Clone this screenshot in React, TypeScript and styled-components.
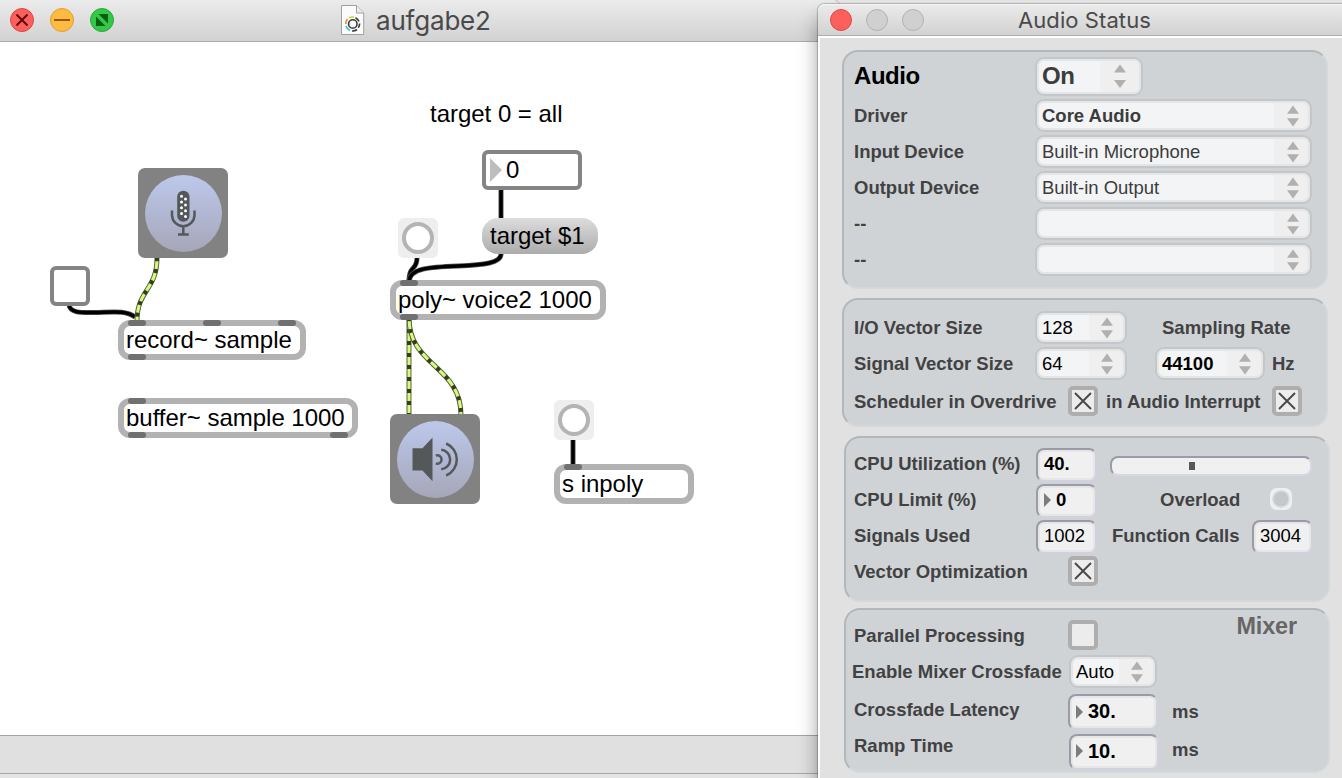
import React from "react";
import styled, { createGlobalStyle } from "styled-components";

const Global = createGlobalStyle`
  * { box-sizing: border-box; }
  body { margin: 0; background: #fff; font-family: "Liberation Sans", Arial, sans-serif; overflow: hidden; }
  svg { display: block; }
`;

const Desktop = styled.main`
  position: relative;
  width: 1342px;
  height: 778px;
  overflow: hidden;
  background: #e6e6e6;
`;

const PatcherWindow = styled.section`
  display: flex;
  flex-direction: column;
  width: 840px;
  height: 778px;
  background: #fff;
  border-top-right-radius: 8px;
  box-shadow: 0 0 1px 1px rgba(0, 0, 0, 0.2);
  overflow: hidden;
`;

const TitleBar = styled.header<{ $height: number; $size: number; $indent: number }>`
  display: flex;
  flex: none;
  align-items: center;
  height: ${(p) => p.$height}px;
  padding-left: ${(p) => p.$indent}px;
  background: linear-gradient(#ebebeb, #d2d2d2);
  border-bottom: 1px solid #adadad;
  color: #4a4a4a;
  font-family: Inter, Roboto, sans-serif;
  font-size: ${(p) => p.$size}px;
  white-space: nowrap;
`;

const Lights = styled.div<{ $gap: number }>`
  display: flex;
  gap: ${(p) => p.$gap}px;
`;

const Light = styled.span<{ $fill: string; $edge: string; $size?: number }>`
  display: grid;
  place-items: center;
  width: ${(p) => p.$size ?? 24}px;
  height: ${(p) => p.$size ?? 24}px;
  margin-top: ${(p) => (p.$size ? 0 : -1)}px;
  border-radius: 50%;
  background: ${(p) => p.$fill};
  border: 1px solid ${(p) => p.$edge};
`;

const DocIcon = styled.svg`
  margin-left: 227px;
`;

const Title = styled.h1<{ $left: number; $tracking: number }>`
  margin: 0 0 0 ${(p) => p.$left}px;
  font-size: inherit;
  font-weight: 400;
  letter-spacing: ${(p) => p.$tracking}px;
`;

const Canvas = styled.div`
  position: relative;
  flex: 1;
  background: #fff;
`;

const StatusBar = styled.footer`
  height: 43px;
  flex: none;
  background: #e0e0e0;
  border-top: 1px solid #a4a4a4;
`;

const StatusEdge = styled.div`
  height: 5px;
  margin-top: 37px;
  border-top: 1px solid #a8a8a8;
  background: #e4e4e4;
`;

const Node = styled.div<{ $x: number; $y: number; $w: number; $h: number }>`
  position: absolute;
  left: ${(p) => p.$x}px;
  top: ${(p) => p.$y - 42}px;
  width: ${(p) => p.$w}px;
  height: ${(p) => p.$h}px;
  display: flex;
  align-items: center;
  color: #000;
  font-size: 24px;
  letter-spacing: -0.02px;
  line-height: 28px;
  white-space: nowrap;
`;

const Comment = styled(Node)``;

const ObjectBox = styled(Node)`
  border: 6px solid #b2b2b2;
  border-radius: 12px;
  background: #fff;
  padding-left: 2px;
`;

const ToggleBox = styled(Node)`
  border: 4px solid #848484;
  border-radius: 6px;
  background: #fff;
`;

const NumberNode = styled(ToggleBox)`
  padding-left: 4px;
  gap: 4px;
`;

const MessageBox = styled(Node)`
  border-radius: 16px;
  background: linear-gradient(#dcdcdc, #acacac);
  padding-left: 8px;
`;

const BangBox = styled(Node)`
  justify-content: center;
  border-radius: 6px;
  background: #eeeeee;
`;

const BangRing = styled.span`
  width: 32px;
  height: 32px;
  border: 4px solid #b4b4b4;
  border-radius: 50%;
  background: #fff;
`;

const IoButton = styled(Node)`
  justify-content: center;
  border-radius: 7px;
  background: #828282;
`;

const IoDisc = styled.span`
  display: grid;
  place-items: center;
  width: 77px;
  height: 77px;
  border-radius: 50%;
  background: linear-gradient(#bcc8ec, #a6a6b8);
`;

const Port = styled.i<{ $x: number; $bottom?: boolean }>`
  position: absolute;
  left: ${(p) => p.$x}px;
  ${(p) => (p.$bottom ? "bottom: -6px;" : "top: -6px;")}
  width: 18px;
  height: 6px;
  border-radius: 3px;
  background: #707070;
`;

const Cords = styled.svg`
  position: absolute;
  left: 0;
  top: 0;
`;

const StatusWindow = styled.section`
  position: absolute;
  left: 818px;
  top: 4px;
  width: 540px;
  height: 790px;
  background: #e1e1e1;
  border-top-left-radius: 7px;
  box-shadow: 0 0 1px 1px rgba(0, 0, 0, 0.22), 0 14px 20px rgba(0, 0, 0, 0.38);
  display: flex;
  flex-direction: column;
`;

const StatusTitleBar = styled(TitleBar)`
  border-top-left-radius: 7px;
  box-shadow: inset 0 1px #f6f6f6;
`;

const StatusBody = styled.div`
  flex: 1;
  border-top: 2px solid #fff;
  border-left: 2px solid #fff;
  padding: 12px 0 0 22px;
`;

const Panel = styled.section<{ $height: number; $left?: number; $gap: number; $pad: number }>`
  display: flex;
  flex-direction: column;
  position: relative;
  width: 486px;
  height: ${(p) => p.$height}px;
  margin: 0 0 ${(p) => p.$gap}px ${(p) => p.$left ?? 0}px;
  padding: ${(p) => p.$pad}px 0 0 ${(p) => 10 - (p.$left ?? 0)}px;
  border: 2px solid;
  border-color: #b1b7bb #d3d8dc #d3d8dc #b1b7bb;
  border-radius: 16px;
  background: #cfd3d6;
`;

const Row = styled.div<{ $height?: number }>`
  display: flex;
  align-items: center;
  flex: none;
  height: ${(p) => p.$height ?? 36}px;
`;

const Label = styled.span<{ $w?: number; $size?: number; $color?: string; $up?: number; $out?: number }>`
  flex: none;
  width: ${(p) => (p.$w ? p.$w + "px" : "auto")};
  margin-left: ${(p) => -(p.$out ?? 0)}px;
  padding-top: 1px;
  padding-bottom: ${(p) => p.$up ?? 0}px;
  color: ${(p) => p.$color ?? "#424242"};
  font-size: ${(p) => p.$size ?? 18.5}px;
  font-weight: 700;
  letter-spacing: ${(p) => (p.$size ? -0.45 : 0)}px;
  line-height: 22px;
  white-space: nowrap;
`;

const SelectBox = styled.div<{ $w: number; $tall?: boolean; $arrow: number; $bold?: boolean; $dark?: boolean; $ml?: number }>`
  display: flex;
  flex: none;
  align-items: center;
  justify-content: space-between;
  width: ${(p) => p.$w}px;
  height: ${(p) => (p.$tall ? 39 : 33)}px;
  margin-left: ${(p) => p.$ml ?? 0}px;
  padding: ${(p) => (p.$tall ? 0 : 1)}px ${(p) => (p.$tall ? 15 : p.$w < 200 ? 12 : 11)}px 0 5px;
  border: 2px solid #c3c7ca;
  border-radius: 9px;
  box-shadow: inset 0 0 0 2px #e4e5e6;
  background: linear-gradient(to left, #efefef ${(p) => p.$arrow}px, #f3f4f6 ${(p) => p.$arrow}px);
  color: ${(p) => (p.$dark ? "#000" : "#3c3c3c")};
  font-size: ${(p) => (p.$tall ? 24 : 18.5)}px;
  font-weight: ${(p) => (p.$bold ? 700 : 400)};
  letter-spacing: ${(p) => (p.$tall ? -0.4 : 0)}px;
  white-space: nowrap;
`;

const ValueBox = styled.div<{ $w: number; $h?: number; $bold?: boolean; $size?: number; $pad?: number; $ml?: number; $up?: number }>`
  display: flex;
  flex: none;
  align-items: center;
  gap: 5px;
  width: ${(p) => p.$w}px;
  height: ${(p) => p.$h ?? 34}px;
  margin-left: ${(p) => p.$ml ?? 0}px;
  padding: 0 0 ${(p) => p.$up ?? 2}px ${(p) => p.$pad ?? 6}px;
  border: 2px solid;
  border-color: #9b9ba8 #d2d2de #d2d2de #9b9ba8;
  border-radius: 8px;
  box-shadow: inset 0 0 0 2px #e6e6e6;
  background: #f0f0f0;
  color: #000;
  font-size: ${(p) => p.$size ?? 18.5}px;
  font-weight: ${(p) => (p.$bold ? 700 : 400)};
`;

const Check = styled.span<{ $ml?: number }>`
  display: grid;
  flex: none;
  place-items: center;
  width: 30px;
  height: 30px;
  margin-left: ${(p) => p.$ml ?? 0}px;
  border: 4px solid #aeaeae;
  border-radius: 5px;
  background: #ececec;
`;

const Meter = styled.div`
  display: flex;
  align-items: center;
  width: 202px;
  height: 20px;
  margin: 2px 0 0 13px;
  border: 2px solid;
  border-color: #9b9bab #d6d6e4 #d6d6e4 #9b9bab;
  border-radius: 8px;
  background: #f0f0f0;
`;

const MeterMark = styled.span`
  width: 6px;
  height: 8px;
  margin-left: 77px;
  background: #585858;
`;

const Led = styled.span`
  width: 22px;
  height: 22px;
  margin: 0 0 4px 30px;
  border-radius: 7px;
  background: radial-gradient(circle, #c4c8cc 0 7px, #d8dadc 7.5px 8.5px, #eeeff0 9px);
`;

const Spacer = styled.span<{ $w: number }>`
  flex: none;
  width: ${(p) => p.$w}px;
`;

const MixerTag = styled(Label)`
  position: absolute;
  right: 31px;
  top: 4px;
  letter-spacing: -0.1px;
`;

const Steppers = () => (
  <svg width="12" height="22" viewBox="0 0 12 22" fill="#b0b0b0">
    <path d="M6 0.5 12 8.7H0Z M0 13.3H12L6 21.5Z" />
  </svg>
);

const TallSteppers = () => (
  <svg width="12" height="24" viewBox="0 0 12 24" fill="#b0b0b0">
    <path d="M6 0.5 12 8.5H0Z M0 16H12L6 24Z" />
  </svg>
);

const Cross = () => (
  <svg width="18" height="18" viewBox="0 0 18 18" stroke="#484848" strokeWidth="1.9">
    <path d="M1 1 17 17M17 1 1 17" />
  </svg>
);

const Drag = () => (
  <svg width="7" height="14" viewBox="0 0 7 14" fill="#7c7c7c">
    <path d="M0 0 7 7 0 14Z" />
  </svg>
);

const Microphone = () => (
  <svg width="77" height="77" viewBox="144.500 174.500 77 77">
    <rect x="176.700" y="190.200" width="12.300" height="31" rx="6" fill="#555859" />
    <path
      d="M171.500 210V214.500A11.200 11.200 0 0 0 194 214.500V210M182.800 226V234M177.500 234H188.300"
      fill="none"
      stroke="#555859"
      strokeWidth="2.5"
    />
    <g fill="#fff">
      {[195.7, 201.5, 207.3, 213.1].map((y) => (
        <React.Fragment key={y}>
          <circle cx="181" cy={y} r="1.500" />
          <circle cx="185" cy={y + 2.9} r="1.500" />
        </React.Fragment>
      ))}
    </g>
  </svg>
);

const Speaker = () => (
  <svg width="77" height="77" viewBox="396.500 420.500 77 77">
    <path d="M412 447.700H422L432 437V480.700L422 470H412Z" fill="#555859" />
    <g fill="none" stroke="#555859" strokeWidth="2.500">
      <path d="M435.300 455.100A4.200 4.200 0 1 1 435.300 462.900" />
      <path d="M440.700 449.200A9.840 9.840 0 0 1 440.700 468.800" />
      <path d="M445.700 443A17.400 17.400 0 0 1 445.700 475" />
    </g>
  </svg>
);

const signalCords = [
  "M157 258C157 290 137 290 137 321",
  "M409 318V415",
  "M409 318C409 366 461 366 461 415",
];

const messageCords = [
  "M69 305C70 312 78 313 95 312.500C113 312 126 310 135 317",
  "M501 189V219",
  "M417 258C417 271 409 264 409 282",
  "M501 254C501 263 484 265 458 266C430 267 409 268 409 282",
  "M573 439V465",
];

export default function App() {
  return (
    <Desktop>
      <Global />
      <PatcherWindow>
        <TitleBar $height={42} $size={26} $indent={10}>
          <Lights $gap={16}>
            <Light $fill="#fc605c" $edge="#e0443f">
              <svg width="12" height="12" stroke="#66090a" strokeWidth="2">
                <path d="M0.500 0.500 11.500 11.500M11.500 0.500 0.500 11.500" />
              </svg>
            </Light>
            <Light $fill="#fdbc40" $edge="#dfa033">
              <svg width="16" height="2" fill="#985712">
                <rect width="16" height="2" />
              </svg>
            </Light>
            <Light $fill="#34c84a" $edge="#27a935">
              <svg width="12" height="12" fill="#0a6010">
                <path d="M2.500 0H12V9.500ZM0 2.500V12H9.500Z" />
              </svg>
            </Light>
          </Lights>
          <DocIcon width="24" height="31" viewBox="0 0 24 31">
            <path d="M0.500 0.500H15.500L22.700 8V29.500H0.500Z" fill="#fbfbfb" stroke="#a0a0a0" />
            <path d="M15.500 0.500V8H22.700" fill="#ececec" stroke="#a0a0a0" />
            <g fill="none" strokeWidth="1.600">
              <path d="M8 12.800A7 7 0 0 1 13 12.300" stroke="#c5d92f" />
              <path d="M4.800 19A7 7 0 0 1 6.500 14" stroke="#f08030" />
              <path d="M5 21A7 7 0 0 0 9 25.500" stroke="#35b8ea" />
              <path d="M14.500 12.700A7 7 0 0 1 18 16.500M18.600 18.500A7 7 0 0 1 17.300 22.700M16 24.500A7 7 0 0 1 11 26" stroke="#3c3c3c" />
              <circle cx="11.800" cy="19" r="4.200" stroke="#3c3c3c" />
            </g>
          </DocIcon>
          <Title $left={11} $tracking={-0.2}>aufgabe2</Title>
        </TitleBar>
        <Canvas>
          <Cords width="818" height="693" viewBox="0 42 818 693" fill="none">
            {messageCords.map((d) => (
              <g key={d}>
                <path d={d} stroke="#555" strokeWidth="5" />
                <path d={d} stroke="#000" strokeWidth="3.500" />
              </g>
            ))}
            {signalCords.map((d) => (
              <g key={d}>
                <path d={d} stroke="#5a6440" strokeWidth="5" />
                <path d={d} stroke="#d6fb7c" strokeWidth="3" />
                <path d={d} stroke="#353c20" strokeWidth="4" strokeDasharray="4 8" strokeDashoffset="1" />
              </g>
            ))}
          </Cords>
          <Comment $x={430} $y={100} $w={140} $h={28}>target 0 = all</Comment>
          <NumberNode $x={482} $y={150} $w={100} $h={40}>
            <svg width="12" height="24" fill="#bdbdbd">
              <path d="M0 0 12 12 0 24Z" />
            </svg>
            0
          </NumberNode>
          <MessageBox $x={482} $y={218} $w={116} $h={36}>target $1</MessageBox>
          <IoButton $x={138} $y={168} $w={90} $h={90}>
            <IoDisc><Microphone /></IoDisc>
          </IoButton>
          <ToggleBox $x={50} $y={266} $w={40} $h={40} />
          <BangBox $x={398} $y={218} $w={40} $h={40}><BangRing /></BangBox>
          <ObjectBox $x={118} $y={320} $w={188} $h={40}>
            record~ sample
            <Port $x={4} /><Port $x={79} /><Port $x={154} />
            <Port $x={4} $bottom />
          </ObjectBox>
          <ObjectBox $x={118} $y={398} $w={240} $h={40}>
            buffer~ sample 1000
            <Port $x={4} />
            <Port $x={4} $bottom /><Port $x={206} $bottom />
          </ObjectBox>
          <ObjectBox $x={390} $y={280} $w={216} $h={40}>
            poly~ voice2 1000
            <Port $x={4} />
            <Port $x={4} $bottom />
          </ObjectBox>
          <IoButton $x={390} $y={414} $w={90} $h={90}>
            <IoDisc><Speaker /></IoDisc>
          </IoButton>
          <BangBox $x={554} $y={400} $w={40} $h={40}><BangRing /></BangBox>
          <ObjectBox $x={554} $y={464} $w={140} $h={40}>
            s inpoly
            <Port $x={4} />
          </ObjectBox>
        </Canvas>
        <StatusBar><StatusEdge /></StatusBar>
      </PatcherWindow>

      <StatusWindow>
        <StatusTitleBar $height={32} $size={22} $indent={12}>
          <Lights $gap={14}>
            <Light $size={22} $fill="#fc605c" $edge="#e0443f" />
            <Light $size={22} $fill="#d0d0d0" $edge="#b2b2b2" />
            <Light $size={22} $fill="#d0d0d0" $edge="#b2b2b2" />
          </Lights>
          <Title $left={94} $tracking={0.08}>Audio Status</Title>
        </StatusTitleBar>
        <StatusBody>
          <Panel $height={239} $gap={9} $pad={3}>
            <Row $height={42}>
              <Label $w={181} $size={24} $color="#000" $up={2}>Audio</Label>
              <SelectBox $w={108} $tall $arrow={41} $bold>On<TallSteppers /></SelectBox>
            </Row>
            <Row>
              <Label $w={181}>Driver</Label>
              <SelectBox $w={277} $arrow={36} $bold>Core Audio<Steppers /></SelectBox>
            </Row>
            <Row>
              <Label $w={181}>Input Device</Label>
              <SelectBox $w={277} $arrow={36}>Built-in Microphone<Steppers /></SelectBox>
            </Row>
            <Row>
              <Label $w={181}>Output Device</Label>
              <SelectBox $w={277} $arrow={36}>Built-in Output<Steppers /></SelectBox>
            </Row>
            <Row>
              <Label $w={181}>--</Label>
              <SelectBox $w={277} $arrow={36}><span /><Steppers /></SelectBox>
            </Row>
            <Row>
              <Label $w={181}>--</Label>
              <SelectBox $w={277} $arrow={36}><span /><Steppers /></SelectBox>
            </Row>
          </Panel>

          <Panel $height={129} $gap={9} $pad={9}>
            <Row>
              <Label $w={181}>I/O Vector Size</Label>
              <SelectBox $w={92} $arrow={36} $dark>128<Steppers /></SelectBox>
              <Spacer $w={35} />
              <Label>Sampling Rate</Label>
            </Row>
            <Row>
              <Label $w={181}>Signal Vector Size</Label>
              <SelectBox $w={92} $arrow={36} $dark>64<Steppers /></SelectBox>
              <SelectBox $w={110} $ml={28} $arrow={36} $dark $bold>44100<Steppers /></SelectBox>
              <Spacer $w={7} />
              <Label>Hz</Label>
            </Row>
            <Row $height={40}>
              <Label $w={214}>Scheduler in Overdrive</Label>
              <Check><Cross /></Check>
              <Spacer $w={8} />
              <Label $w={166}>in Audio Interrupt</Label>
              <Check><Cross /></Check>
            </Row>
          </Panel>

          <Panel $height={166} $gap={6} $left={2} $pad={9}>
            <Row>
              <Label $w={182} $up={4}>CPU Utilization (%)</Label>
              <ValueBox $w={61} $bold>40.</ValueBox>
              <Meter><MeterMark /></Meter>
            </Row>
            <Row>
              <Label $w={182} $up={4}>CPU Limit (%)</Label>
              <ValueBox $w={61} $bold><Drag />0</ValueBox>
              <Spacer $w={63} />
              <Label $w={80} $up={4}>Overload</Label>
              <Led />
            </Row>
            <Row>
              <Label $w={182} $up={4}>Signals Used</Label>
              <ValueBox $w={61}>1002</ValueBox>
              <Spacer $w={15} />
              <Label $w={140} $up={4}>Function Calls</Label>
              <ValueBox $w={61}>3004</ValueBox>
            </Row>
            <Row $height={32}>
              <Label $w={214}>Vector Optimization</Label>
              <Check><Cross /></Check>
            </Row>
          </Panel>

          <Panel $height={165} $gap={0} $left={2} $pad={7}>
            <MixerTag $size={23.4} $color="#666">Mixer</MixerTag>
            <Row>
              <Label $w={214}>Parallel Processing</Label>
              <Check />
            </Row>
            <Row>
              <Label $w={217} $out={2}>Enable Mixer Crossfade</Label>
              <SelectBox $w={88} $arrow={36} $dark>Auto<Steppers /></SelectBox>
            </Row>
            <Row $height={45}>
              <Label $w={214} $up={4}>Crossfade Latency</Label>
              <ValueBox $w={90} $h={36} $bold $size={20} $up={0}><Drag />30.</ValueBox>
              <Spacer $w={14} />
              <Label $up={1}>ms</Label>
            </Row>
            <Row>
              <Label $w={215} $up={13}>Ramp Time</Label>
              <ValueBox $w={90} $h={36} $bold $size={20} $pad={5}><Drag />10.</ValueBox>
              <Spacer $w={13} />
              <Label $up={5}>ms</Label>
            </Row>
          </Panel>
        </StatusBody>
      </StatusWindow>
    </Desktop>
  );
}
